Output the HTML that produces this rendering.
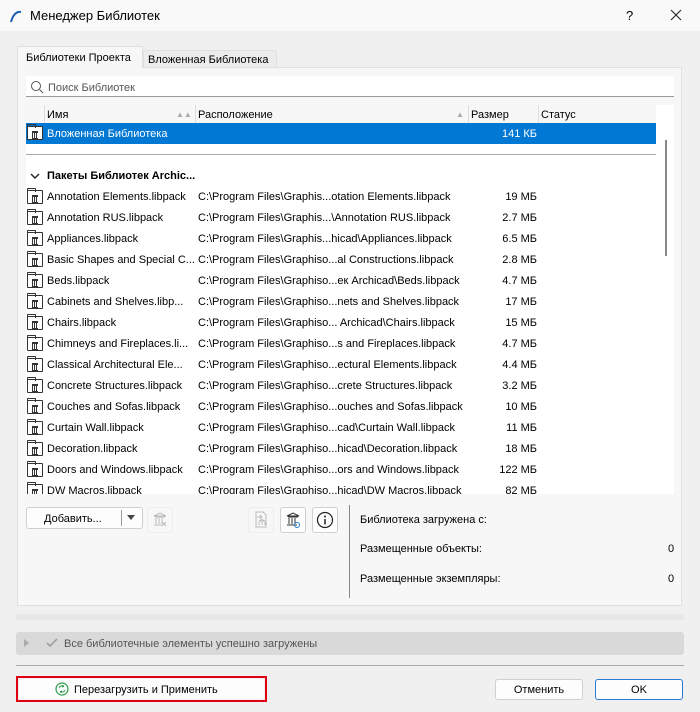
<!DOCTYPE html><html><head><meta charset="utf-8"><style>
*{box-sizing:border-box;margin:0;padding:0}
body{width:700px;height:712px;background:#f0f0f0;font-family:"Liberation Sans",sans-serif;font-size:11px;color:#000;position:relative;overflow:hidden}
.a{position:absolute}
.row{position:absolute;left:26px;width:630px;height:21px;line-height:23px;white-space:nowrap}
.row span{position:absolute;overflow:hidden}
.n{left:21px;width:150px}.p{left:172px;width:272px}.s{left:444px;width:67px;text-align:right}
.ic{position:absolute;left:1px;top:4px;width:16px;height:14px;border:1px solid #333;border-radius:1px;background:#fff}
.ic:before{content:"";position:absolute;left:-1px;top:-3px;width:7px;height:3px;border:1px solid #333;border-bottom:none;border-radius:1px 1px 0 0}
.ic:after{content:"";position:absolute;left:4px;top:4px;width:6px;height:5px;border-top:2px solid #333;border-bottom:1px solid #333;background:repeating-linear-gradient(90deg,#333 0 1px,transparent 1px 2px)}
.btn{position:absolute;background:#fdfdfd;border:1px solid #d0d0d0;border-radius:3px;text-align:center}
</style></head><body>
<div class="a" style="left:0;top:0;width:700px;height:31px;background:#f9f9f9"></div>
<svg class="a" style="left:8px;top:8px" width="16" height="16"><path d="M3 14 Q6 3 13 4" stroke="#1e5fb8" stroke-width="2" fill="none"/></svg>
<div class="a" style="left:30px;top:8px;font-size:13px">Менеджер Библиотек</div>
<div class="a" style="left:626px;top:8px;font-size:13px">?</div>
<svg class="a" style="left:670px;top:9px" width="12" height="12"><path d="M1 1L11 11M11 1L1 11" stroke="#222" stroke-width="1.1"/></svg>

<div class="a" style="left:17px;top:67px;width:665px;height:539px;background:#f7f7f7;border:1px solid #e0e0e0"></div>
<div class="a" style="left:17px;top:46px;width:126px;height:22px;background:#f7f7f7;border:1px solid #e0e0e0;border-bottom:none;padding:5px 0 0 8px">Библиотеки Проекта</div>
<div class="a" style="left:143px;top:50px;width:134px;height:17px;background:#ececec;border:1px solid #e0e0e0;border-bottom:none;padding:3px 0 0 4px">Вложенная Библиотека</div>

<div class="a" style="left:26px;top:76px;width:648px;height:21px;background:#fff;border-bottom:1px solid #999"></div>
<svg class="a" style="left:30px;top:80px" width="14" height="14"><circle cx="6" cy="6" r="4.5" stroke="#555" fill="none"/><path d="M9.5 9.5L13 13" stroke="#555"/></svg>
<div class="a" style="left:48px;top:82px;color:#555">Поиск Библиотек</div>

<div class="a" style="left:26px;top:105px;width:648px;height:389px;background:#fff"></div>
<div class="a" style="left:26px;top:105px;width:630px;height:18px;background:#f7f7f7"></div>
<div class="a" style="left:44px;top:105px;width:1px;height:18px;background:#ddd"></div>
<div class="a" style="left:195px;top:105px;width:1px;height:18px;background:#ddd"></div>
<div class="a" style="left:468px;top:105px;width:1px;height:18px;background:#ddd"></div>
<div class="a" style="left:538px;top:105px;width:1px;height:18px;background:#ddd"></div>
<div class="a" style="left:47px;top:109px">Имя</div>
<div class="a" style="left:176px;top:110px;font-size:8px;color:#aaa">▲▲</div>
<div class="a" style="left:198px;top:109px">Расположение</div>
<div class="a" style="left:456px;top:110px;font-size:8px;color:#aaa">▲</div>
<div class="a" style="left:471px;top:109px">Размер</div>
<div class="a" style="left:541px;top:109px">Статус</div>
<div class="a" style="left:665px;top:140px;width:2px;height:116px;background:#888"></div>

<div class="row" style="top:123px;background:#0078d4;color:#fff"><div class="ic" style="top:3px"></div><span class="n">Вложенная Библиотека</span><span class="s">141 КБ</span></div>
<div class="a" style="left:26px;top:154px;width:630px;height:1px;background:#aaa"></div>
<svg class="a" style="left:30px;top:172px" width="10" height="8"><path d="M1 2L5 6L9 2" stroke="#222" stroke-width="1.4" fill="none"/></svg>
<div class="a" style="left:47px;top:170px;font-weight:bold">Пакеты Библиотек Archic...</div>

<div class="row" style="top:186px"><div class="ic"></div><span class="n">Annotation Elements.libpack</span><span class="p">C:\Program Files\Graphis...otation Elements.libpack</span><span class="s">19 МБ</span></div>
<div class="row" style="top:207px"><div class="ic"></div><span class="n">Annotation RUS.libpack</span><span class="p">C:\Program Files\Graphis...\Annotation RUS.libpack</span><span class="s">2.7 МБ</span></div>
<div class="row" style="top:228px"><div class="ic"></div><span class="n">Appliances.libpack</span><span class="p">C:\Program Files\Graphis...hicad\Appliances.libpack</span><span class="s">6.5 МБ</span></div>
<div class="row" style="top:249px"><div class="ic"></div><span class="n">Basic Shapes and Special C...</span><span class="p">C:\Program Files\Graphiso...al Constructions.libpack</span><span class="s">2.8 МБ</span></div>
<div class="row" style="top:270px"><div class="ic"></div><span class="n">Beds.libpack</span><span class="p">C:\Program Files\Graphiso...ек Archicad\Beds.libpack</span><span class="s">4.7 МБ</span></div>
<div class="row" style="top:291px"><div class="ic"></div><span class="n">Cabinets and Shelves.libp...</span><span class="p">C:\Program Files\Graphiso...nets and Shelves.libpack</span><span class="s">17 МБ</span></div>
<div class="row" style="top:312px"><div class="ic"></div><span class="n">Chairs.libpack</span><span class="p">C:\Program Files\Graphiso... Archicad\Chairs.libpack</span><span class="s">15 МБ</span></div>
<div class="row" style="top:333px"><div class="ic"></div><span class="n">Chimneys and Fireplaces.li...</span><span class="p">C:\Program Files\Graphiso...s and Fireplaces.libpack</span><span class="s">4.7 МБ</span></div>
<div class="row" style="top:354px"><div class="ic"></div><span class="n">Classical Architectural Ele...</span><span class="p">C:\Program Files\Graphiso...ectural Elements.libpack</span><span class="s">4.4 МБ</span></div>
<div class="row" style="top:375px"><div class="ic"></div><span class="n">Concrete Structures.libpack</span><span class="p">C:\Program Files\Graphiso...crete Structures.libpack</span><span class="s">3.2 МБ</span></div>
<div class="row" style="top:396px"><div class="ic"></div><span class="n">Couches and Sofas.libpack</span><span class="p">C:\Program Files\Graphiso...ouches and Sofas.libpack</span><span class="s">10 МБ</span></div>
<div class="row" style="top:417px"><div class="ic"></div><span class="n">Curtain Wall.libpack</span><span class="p">C:\Program Files\Graphiso...cad\Curtain Wall.libpack</span><span class="s">11 МБ</span></div>
<div class="row" style="top:438px"><div class="ic"></div><span class="n">Decoration.libpack</span><span class="p">C:\Program Files\Graphiso...hicad\Decoration.libpack</span><span class="s">18 МБ</span></div>
<div class="row" style="top:459px"><div class="ic"></div><span class="n">Doors and Windows.libpack</span><span class="p">C:\Program Files\Graphiso...ors and Windows.libpack</span><span class="s">122 МБ</span></div>
<div class="a" style="left:26px;top:480px;width:630px;height:14px;overflow:hidden"><div class="row" style="left:0;top:0"><div class="ic"></div><span class="n">DW Macros.libpack</span><span class="p">C:\Program Files\Graphiso...hicad\DW Macros.libpack</span><span class="s">82 МБ</span></div></div>

<div class="btn" style="left:26px;top:507px;width:117px;height:22px"></div>
<div class="a" style="left:44px;top:513px">Добавить...</div>
<div class="a" style="left:121px;top:510px;width:1px;height:16px;background:#999"></div>
<svg class="a" style="left:127px;top:515px" width="8" height="5"><path d="M0 0H8L4 5Z" fill="#444"/></svg>
<div class="btn" style="left:147px;top:507px;width:26px;height:26px;border-color:#eee;background:#f7f7f7"></div>
<svg class="a" style="left:152px;top:512px" width="16" height="16"><path d="M2 4L8 1L14 4Z M3 5H13 M4 6V12 M7 6V12 M10 6V12 M2 13H10 M10 10L14 14M14 10L10 14" stroke="#bbb" fill="none"/></svg>
<div class="btn" style="left:248px;top:507px;width:26px;height:26px;border-color:#eee;background:#f7f7f7"></div>
<svg class="a" style="left:253px;top:511px" width="16" height="18"><path d="M3 1H10L13 4V16H3Z M4 6H9 M7 4L9 6L7 8 M6 10L9 8.5L12 10Z M6 11V14 M9 11V14 M12 11V14" stroke="#bbb" fill="none"/></svg>
<div class="btn" style="left:280px;top:507px;width:26px;height:26px"></div>
<svg class="a" style="left:285px;top:512px" width="16" height="16"><path d="M2 4L8 1L14 4Z M3 5H13 M4 6V12 M7 6V12 M10 6V12 M2 13H12" stroke="#333" fill="none"/><circle cx="12" cy="13" r="2.5" stroke="#2a7bd6" fill="none"/></svg>
<div class="btn" style="left:312px;top:507px;width:26px;height:26px"></div>
<svg class="a" style="left:316px;top:511px" width="18" height="18"><circle cx="9" cy="9" r="7.5" stroke="#222" fill="none" stroke-width="1.2"/><path d="M9 8V13.5" stroke="#222" stroke-width="1.5"/><circle cx="9" cy="5.5" r="1" fill="#222"/></svg>
<div class="a" style="left:349px;top:505px;width:1px;height:93px;background:#888"></div>
<div class="a" style="left:360px;top:514px">Библиотека загружена с:</div>
<div class="a" style="left:360px;top:543px">Размещенные объекты:</div>
<div class="a" style="left:668px;top:543px">0</div>
<div class="a" style="left:360px;top:573px">Размещенные экземпляры:</div>
<div class="a" style="left:668px;top:573px">0</div>

<div class="a" style="left:16px;top:614px;width:668px;height:6px;background:#e8e8e8"></div>
<div class="a" style="left:16px;top:632px;width:668px;height:23px;background:#d9d9d9;border-radius:3px"></div>
<svg class="a" style="left:24px;top:639px" width="6" height="8"><path d="M0 0L5 4L0 8Z" fill="#aaa"/></svg>
<svg class="a" style="left:46px;top:638px" width="12" height="10"><path d="M1 5L4 8L11 1" stroke="#999" stroke-width="1.5" fill="none"/></svg>
<div class="a" style="left:64px;top:638px;color:#555">Все библиотечные элементы успешно загружены</div>
<div class="a" style="left:16px;top:665px;width:668px;height:1px;background:#aaa"></div>

<div class="a" style="left:16px;top:676px;width:251px;height:26px;border:2px solid #e00010"></div>
<div class="btn" style="left:19px;top:679px;width:245px;height:20px;border:none"></div>
<svg class="a" style="left:55px;top:682px" width="14" height="14"><circle cx="7" cy="7" r="6" stroke="#2a9d4a" fill="none" stroke-width="1.2"/><path d="M4 6Q5 3.5 8 4M10 8Q9 10.5 6 10M8 3L8.5 4.5L7 5M6 11L5.5 9.5L7 9" stroke="#2a9d4a" fill="none"/></svg>
<div class="a" style="left:74px;top:684px">Перезагрузить и Применить</div>
<div class="btn" style="left:495px;top:679px;width:88px;height:21px;line-height:21px">Отменить</div>
<div class="btn" style="left:595px;top:679px;width:88px;height:21px;line-height:21px;border-color:#2a7bd6">OK</div>
</body></html>
